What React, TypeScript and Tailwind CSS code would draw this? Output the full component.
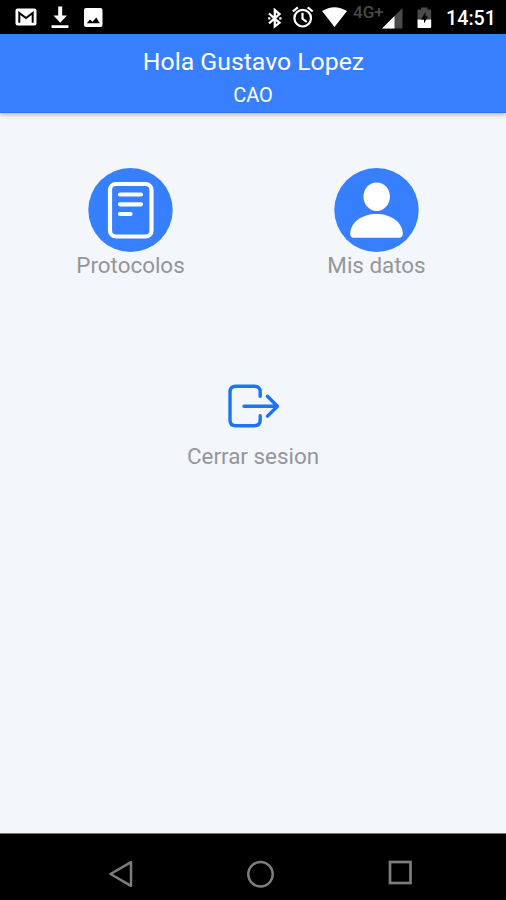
import type { ReactNode } from 'react';

const MailIcon = () => (
  <svg className="w-[22px] h-[18px]" viewBox="0 0 22 18">
    <rect x="0.5" y="0.5" width="21" height="17" rx="2" fill="#fff" />
    <path d="M4.3 14.8V5l6.7 5 6.7-5v9.8" fill="none" stroke="#000" strokeWidth="2" />
  </svg>
);

const DownloadIcon = () => (
  <svg className="w-[18px] h-[23px]" viewBox="0 0 18 23" fill="#fff">
    <path d="M7.2 0.5h4v9H16L9.2 16.8 2.5 9.5h4.7zM0.5 19.3h17v2.8h-17z" />
  </svg>
);

const ImageIcon = () => (
  <svg className="w-[20px] h-[20px]" viewBox="0 0 20 20">
    <rect x="0" y="0" width="18.5" height="19" rx="2" fill="#fff" />
    <path d="M2.8 15.3 6 11.5l2.5 2.3 3.8-4.3 3.5 5.8z" fill="#000" />
  </svg>
);

const BluetoothIcon = () => (
  <svg className="w-[15px] h-[21px]" viewBox="0 0 15 21" fill="none" stroke="#fff" strokeWidth="2.3">
    <path d="M2 5.5 12.500 14.800 7.800 18.500V2L12.500 6 2 15.300" />
    <path d="M1.100 9.300h2.300v2.300h-2.300zM12.200 9.300h2.300v2.300h-2.300z" fill="#fff" stroke="none" />
  </svg>
);

const AlarmIcon = () => (
  <svg className="w-[22px] h-[22px]" viewBox="0 0 22 22" fill="none" stroke="#fff" strokeWidth="2.2">
    <circle cx="10.7" cy="12.2" r="8.3" />
    <path d="M0.8 5.5 5.8 1.3M20.7 5.5l-5-4.2M10.5 6.8v6l4.2 3" />
  </svg>
);

const WifiIcon = () => (
  <svg className="w-[26px] h-[20px]" viewBox="0 0 26 20" fill="#fff">
    <path d="M0 4Q12.5-3.6 25 4L12.5 20z" />
  </svg>
);

const SignalIcon = () => (
  <svg className="w-[22px] h-[21px]" viewBox="0 0 22 21">
    <path d="M0 20.5 20.5 0v20.5z" fill="#4a4a4a" />
    <path d="M0 20.5 12.5 8v12.5z" fill="#fff" />
  </svg>
);

const BatteryIcon = () => (
  <svg className="w-[15px] h-[21px]" viewBox="0 0 15 21">
    <path d="M0.5 3.5q0-1 1-1H4V0.5h6.5v2h2.7q1 0 1 1v9H0.5z" fill="#4a4a4a" />
    <path d="M0.5 12.5h13.7V20q0 1-1 1H1.5q-1 0-1-1z" fill="#fff" />
    <path d="M8.5 5 4 12.5h3v4l4-7H8.5z" fill="#000" />
  </svg>
);

const ProtocolIcon = () => (
  <svg className="w-[85px] h-[84px]" viewBox="0 0 85 84" fill="none" stroke="#fff" strokeLinecap="round">
    <ellipse cx="42.5" cy="42" rx="42.2" ry="42" fill="#367fff" stroke="none" />
    <rect x="22" y="16" width="41.5" height="52.5" rx="6" strokeWidth="4.2" />
    <path d="M32 26.5h21M32 36.3h21M32 46h10.5" strokeWidth="4.2" />
  </svg>
);

const UserIcon = () => (
  <svg className="w-[85px] h-[84px]" viewBox="0 0 85 84" fill="#fff">
    <ellipse cx="42.5" cy="42" rx="42.2" ry="42" fill="#367fff" />
    <ellipse cx="42.7" cy="28.7" rx="13.2" ry="14.3" />
    <path d="M16.2 65.5C16.8 54 28 46 42.5 46s25.7 8 26.3 19.5Q68.8 69.7 65 69.7H20Q16.2 69.7 16.2 65.5z" />
  </svg>
);

const LogoutIcon = () => (
  <svg
    className="w-[52px] h-[44px]"
    viewBox="0 0 52 44"
    fill="none"
    stroke="#1b74fa"
    strokeWidth="3.4"
    strokeLinecap="round"
    strokeLinejoin="round"
  >
    <path d="M33.2 12.3V8q0-5.800-6-5.800H8.800Q3 2.200 3 8v28q0 5.800 5.800 5.800h18.400q6 0 6-5.800v-4.300" />
    <path d="M17 22.200h33M40.500 12.300l9.900 9.900-9.900 9.900" />
  </svg>
);

const StatusBar = () => (
  <div className="flex h-[34px] bg-black text-white">
    <div className="flex pl-[15px]">
      <div className="mt-[8px]"><MailIcon /></div>
      <div className="ml-[14px] mt-[6px]"><DownloadIcon /></div>
      <div className="ml-[15px] mt-[8px]"><ImageIcon /></div>
    </div>
    <div className="ml-auto flex w-[239px]">
      <div className="mt-[8px]"><BluetoothIcon /></div>
      <div className="ml-[10px] mt-[6px]"><AlarmIcon /></div>
      <div className="ml-[8px] mt-[7px]"><WifiIcon /></div>
      <span className="ml-[5px] mt-[3px] w-[29px] whitespace-nowrap text-[17px] leading-[18px] font-medium text-[#484848]">4G+</span>
      <div className="mt-[8px]"><SignalIcon /></div>
      <div className="ml-[13px] mt-[7px]"><BatteryIcon /></div>
      <span className="ml-[14px] mt-[7px] text-[19.7px] leading-[24px] font-medium">14:51</span>
    </div>
  </div>
);

interface MenuItemProps {
  icon: ReactNode;
  label: string;
}

const MenuItem = ({ icon, label }: MenuItemProps) => (
  <button className="flex w-[161px] flex-col items-center text-[22.4px] leading-[26px] text-[#949699]">
    {icon}
    {label}
  </button>
);

const NavBar = () => (
  <div className="flex h-[67px] border-t border-[#777] bg-black pl-[108px] pt-[26px]">
    <svg className="w-[26px] h-[29px]" viewBox="0 0 26 29" fill="none" stroke="#7d7d7d" strokeWidth="2.5" strokeLinejoin="round">
      <path d="M2.5 14 23 2.2v23.6z" />
    </svg>
    <svg className="ml-[112px] w-[29px] h-[29px]" viewBox="0 0 29 29" fill="none" stroke="#7d7d7d" strokeWidth="2.5">
      <circle cx="14.5" cy="14.3" r="12.2" />
    </svg>
    <svg className="ml-[112px] w-[28px] h-[28px]" viewBox="0 0 28 28" fill="none" stroke="#7d7d7d" strokeWidth="2.7">
      <rect x="3" y="2" width="20.5" height="21" />
    </svg>
  </div>
);

const App = () => {
  return (
    <div className="flex h-[900px] w-[506px] flex-col overflow-hidden bg-[#f3f6fb] font-['Roboto',sans-serif]">
      <StatusBar />
      <header className="h-[79px] border-b border-[#2f72e8] bg-[#387fff] pt-[11px] text-center text-white shadow-[0_2px_4px_rgba(0,0,0,0.25)]">
        <h1 className="pl-px text-[24.8px] leading-[33px]">Hola Gustavo Lopez</h1>
        <p className="mt-[5px] text-[20px] leading-[24px]">CAO</p>
      </header>
      <main className="flex flex-1 flex-col items-center">
        <div className="mt-[55px] flex w-full justify-between pl-[50px] pr-[49px]">
          <MenuItem icon={<ProtocolIcon />} label="Protocolos" />
          <MenuItem icon={<UserIcon />} label="Mis datos" />
        </div>
        <div className="mt-[106px]">
          <MenuItem icon={<div className="mb-[15px]"><LogoutIcon /></div>} label="Cerrar sesion" />
        </div>
      </main>
      <NavBar />
    </div>
  );
};

export default App;
